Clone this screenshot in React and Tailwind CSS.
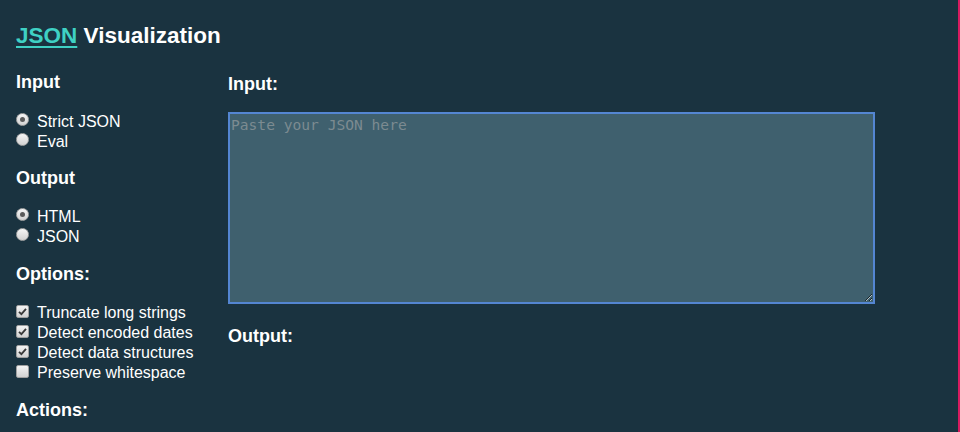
import React from 'react';

const Radio = ({ checked, label }) => (
  <label className="flex items-center h-5 leading-5">
    <span className="relative w-[13px] h-[13px] rounded-full border border-[#a8a8a8] bg-gradient-to-b from-[#f6f6f6] to-[#d2d2d2] mr-2 -mt-[5px] shrink-0">
      {checked && <span className="absolute left-[3px] top-[3px] w-[5px] h-[5px] rounded-full bg-[#5a5a5a]" />}
    </span>
    <span>{label}</span>
  </label>
);

const Check = ({ checked, label }) => (
  <label className="flex items-center h-5 leading-5">
    <span className="relative w-[13px] h-[13px] rounded-[2px] border border-[#a0a0a0] bg-gradient-to-b from-[#f4f4f4] to-[#d2d2d2] mr-2 -mt-[4px] shrink-0 flex items-center justify-center">
      {checked && (
        <svg width="9" height="9" viewBox="0 0 9 9">
          <path d="M1 4.8 L3.4 7.2 L8 1.8" fill="none" stroke="#3a3a3a" strokeWidth="1.8" />
        </svg>
      )}
    </span>
    <span>{label}</span>
  </label>
);

const Heading = ({ children, className = '' }) => (
  <h3 className={`text-[18px] leading-[21px] font-bold ${className}`}>{children}</h3>
);

export default function App() {
  return (
    <div
      className="w-full h-[432px] overflow-hidden bg-[#1a3340] text-white border-r-2 border-[#d81b60]"
      style={{ fontFamily: '"Liberation Sans", Arial, sans-serif' }}
    >
      <h1 className="pt-[22px] pl-4 text-[22.5px] leading-[28px] font-bold">
        <a href="#" className="text-[#3fd1c4] underline underline-offset-[3px]">JSON</a> Visualization
      </h1>

      <div className="flex pl-4 mt-[22px]">
        {/* left: controls */}
        <div className="w-[212px] shrink-0 text-[16px]">
          <Heading>Input</Heading>
          <div className="mt-[19px]">
            <Radio checked label="Strict JSON" />
            <Radio label="Eval" />
          </div>

          <Heading className="mt-4">Output</Heading>
          <div className="mt-[18px]">
            <Radio checked label="HTML" />
            <Radio label="JSON" />
          </div>

          <Heading className="mt-[17px]">Options:</Heading>
          <div className="mt-[18px]">
            <Check checked label="Truncate long strings" />
            <Check checked label="Detect encoded dates" />
            <Check checked label="Detect data structures" />
            <Check label="Preserve whitespace" />
          </div>

          <Heading className="mt-[17px]">Actions:</Heading>
        </div>

        {/* right: input / output */}
        <div className="flex flex-col">
          <Heading className="mt-[2px]">Input:</Heading>
          <textarea
            autoFocus
            placeholder="Paste your JSON here"
            className="mt-[17px] w-[647px] h-[192px] bg-[#3f606e] border-2 border-[#5486d2] outline-none px-[1px] py-[2px] text-[14.6px] leading-[18px] text-white placeholder:text-[#7c8b91]"
            style={{ fontFamily: '"DejaVu Sans Mono", monospace' }}
          />
          <Heading className="mt-[22px]">Output:</Heading>
        </div>
      </div>
    </div>
  );
}
